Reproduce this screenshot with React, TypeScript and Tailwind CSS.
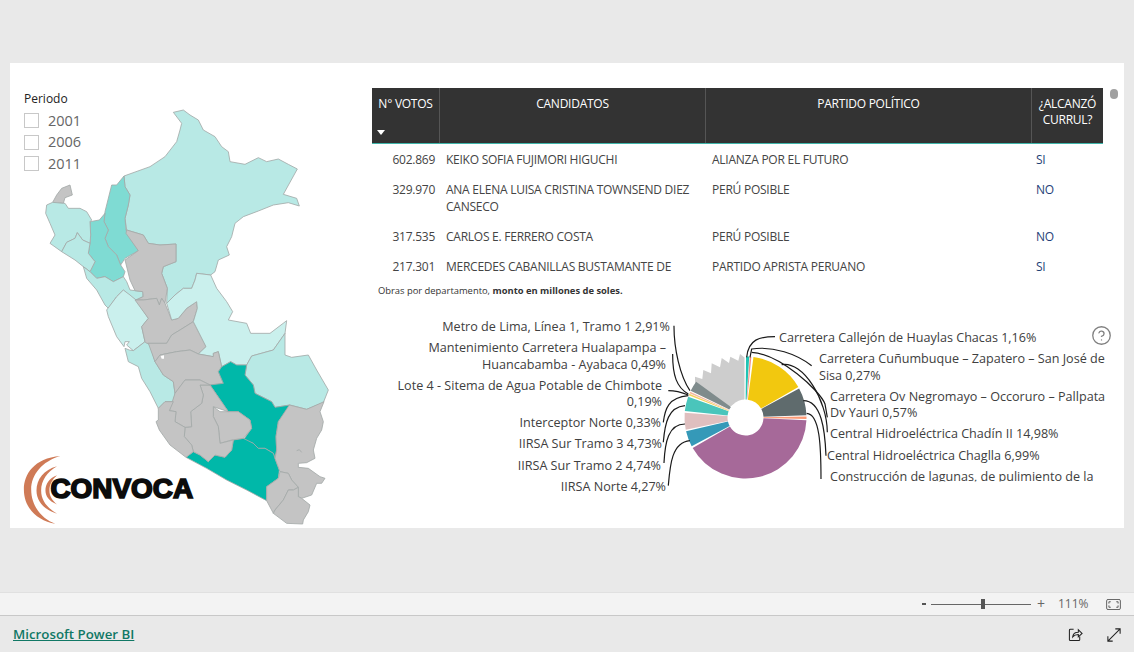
import { CircleHelp } from 'lucide-react';

type Row = { votos: string; nombre: string; partido: string; curul: string };

const rows: Row[] = [
  { votos: '602.869', nombre: 'KEIKO SOFIA FUJIMORI HIGUCHI', partido: 'ALIANZA POR EL FUTURO', curul: 'SI' },
  { votos: '329.970', nombre: 'ANA ELENA LUISA CRISTINA TOWNSEND DIEZ CANSECO', partido: 'PERÚ POSIBLE', curul: 'NO' },
  { votos: '317.535', nombre: 'CARLOS E. FERRERO COSTA', partido: 'PERÚ POSIBLE', curul: 'NO' },
  { votos: '217.301', nombre: 'MERCEDES CABANILLAS BUSTAMANTE DE LLANOS', partido: 'PARTIDO APRISTA PERUANO', curul: 'SI' },
];

const LIGHT = '#b8e9e5';
const PALE = '#caf0ed';
const MID = '#7fdbd3';
const DARK = '#00b8a9';
const GRAY = '#c4c4c4';

// departments, in the coordinates of a 3x crop of the map
const regions: [string, string][] = [
  // Loreto
  [LIGHT, '372,288 450,260 495,230 530,185 540,150 545,130 520,97 550,90 570,105 595,120 610,150 645,170 665,200 685,215 690,245 735,253 775,233 800,245 835,237 865,253 892,267 850,343 890,355 898,378 865,368 820,375 775,393 730,410 705,430 695,470 680,500 688,525 655,540 645,575 632,585 590,580 585,600 575,625 550,625 525,645 500,670 502,625 485,580 490,560 528,545 528,492 480,495 445,490 430,465 380,450 375,415 385,375 390,345 375,320'],
  // Amazonas
  [MID, '372,288 350,315 335,315 315,395 312,425 325,450 315,475 325,500 350,525 362,555 375,535 415,512 378,450 375,415 385,375 390,345 375,320'],
  // Cajamarca
  [MID, '315,400 298,420 270,425 272,465 270,490 265,520 285,545 270,575 290,595 315,590 340,605 370,590 375,575 362,555 350,525 325,500 315,475 325,450 312,425'],
  // Tumbes
  [GRAY, '158,367 170,345 185,325 210,315 217,345 195,353 190,370'],
  // Piura
  [LIGHT, '137,400 140,375 158,367 190,370 195,370 205,385 240,385 260,395 275,420 270,425 272,465 270,490 248,480 232,458 225,475 200,487 185,515 150,490 165,465 150,430'],
  // Lambayeque
  [LIGHT, '185,515 200,487 225,475 232,458 248,480 270,490 265,520 285,545 270,575 250,560 225,540'],
  // La Libertad
  [LIGHT, '250,560 270,575 290,595 315,590 340,605 370,590 380,605 390,630 430,635 428,650 408,660 400,655 380,640 370,630 350,650 325,685 315,675 290,630 260,595'],
  // Ancash
  [PALE, '320,690 350,650 370,630 390,645 408,660 445,715 425,740 435,785 400,812 380,795 388,785 375,785 372,800 350,770 325,710'],
  // Lima
  [LIGHT, '375,805 388,810 400,812 435,785 450,795 465,845 490,885 520,905 525,940 520,965 495,965 475,985 450,935 425,895 415,860 385,845'],
  // San Martin
  [GRAY, '380,450 430,465 445,490 480,495 528,492 528,545 490,560 485,580 502,625 495,670 485,655 478,675 470,655 430,660 408,660 430,650 428,635 405,632 390,600 375,540 415,512 378,460'],
  // Huanuco
  [GRAY, '405,660 430,660 470,655 478,675 485,655 495,670 515,720 535,715 560,685 590,665 592,685 580,725 540,750 515,765 500,790 440,790 435,785 425,740 445,715'],
  // Pasco
  [GRAY, '445,790 500,790 515,765 540,750 580,725 618,800 595,822 570,810 530,815 480,825 465,845'],
  // Ucayali
  [PALE, '500,670 525,645 550,625 575,625 585,600 590,580 632,585 650,625 680,665 698,695 685,720 740,730 752,760 810,760 860,722 855,760 820,810 755,828 740,855 710,855 692,845 665,860 655,815 640,820 640,830 595,822 618,800 580,725 592,685 590,665 560,685 535,715 515,720'],
  // Madre de Dios
  [LIGHT, '740,855 755,828 820,810 855,760 855,825 875,832 925,825 950,870 985,930 970,968 920,988 870,975 825,982 815,965 765,940 760,915 735,885'],
  // Junin
  [GRAY, '465,845 480,825 530,815 570,810 595,822 640,830 640,820 655,815 665,860 655,875 670,910 630,915 600,900 555,900 525,940 520,905 490,885'],
  // Cusco
  [DARK, '665,860 692,845 710,855 740,855 735,885 760,915 765,940 815,965 825,982 870,975 835,1025 828,1070 830,1110 825,1135 820,1120 795,1105 775,1105 760,1090 730,1080 755,1045 750,1020 715,995 685,995 630,915 670,910 655,875'],
  // Arequipa
  [DARK, '558,1132 580,1115 600,1125 625,1145 645,1125 675,1132 695,1110 700,1080 730,1075 760,1090 775,1105 795,1105 820,1120 825,1135 838,1170 835,1195 800,1220 800,1262 740,1230 680,1200 620,1165'],
  // Apurimac
  [GRAY, '640,980 660,995 685,995 715,995 750,1020 755,1045 730,1075 695,1080 660,1090 655,1040 640,1010'],
  // Ayacucho
  [GRAY, '630,915 685,995 640,980 640,1010 655,1040 660,1090 700,1080 695,1110 675,1132 645,1125 625,1145 600,1125 580,1115 575,1095 553,1070 555,1042 575,1040 572,995 605,970 610,945 600,915'],
  // Huancavelica
  [GRAY, '555,900 600,900 630,915 600,915 610,945 605,970 572,995 575,1040 555,1042 525,1025 528,995 508,992 525,940'],
  // Ica
  [GRAY, '475,985 495,965 520,965 508,992 528,995 525,1025 555,1042 553,1070 575,1095 580,1115 558,1132 510,1095 478,1050 468,1025 475,1020'],
  // Puno
  [GRAY, '868,975 920,988 972,965 960,995 970,1025 965,1050 950,1075 940,1110 945,1135 920,1148 895,1150 895,1162 925,1165 960,1190 975,1195 965,1210 950,1210 935,1245 905,1255 895,1250 895,1222 875,1200 865,1180 840,1175 838,1170 825,1135 830,1110 828,1070 835,1025'],
  // Moquegua
  [GRAY, '840,1175 865,1180 875,1200 895,1222 880,1230 865,1230 850,1260 825,1290 820,1300 800,1262 800,1220 835,1195'],
  // Tacna
  [GRAY, '895,1222 895,1250 905,1255 930,1275 925,1295 910,1320 908,1332 860,1330 820,1300 825,1290 850,1260 865,1230 880,1230'],
];

const CX = 745.5;
const CY = 418.5;

function slice(from: number, to: number, r: number, inner = 18) {
  const pt = (deg: number, rad: number) => {
    const a = (deg * Math.PI) / 180;
    return `${(CX + rad * Math.sin(a)).toFixed(2)} ${(CY - rad * Math.cos(a)).toFixed(2)}`;
  };
  const large = to - from > 180 ? 1 : 0;
  return `M${pt(from, inner)} L${pt(from, r)} A${r} ${r} 0 ${large} 1 ${pt(to, r)} L${pt(to, inner)} A${inner} ${inner} 0 ${large} 0 ${pt(from, inner)}Z`;
}

const slices: [string, number, number, number][] = [
  ['#1fc4b4', 0.5, 3.5, 61],
  ['#f08f83', 4, 5.5, 61],
  ['#f2c80f', 7.5, 60, 61],
  ['#5f6b6d', 61.5, 88, 61],
  ['#fd9a75', 89, 91.5, 61],
  ['#a66999', 92.5, 240, 61],
  ['#3599b8', 242, 257, 61],
  ['#dfbfbf', 258.5, 274.5, 61],
  ['#4ac5bb', 276, 290, 61],
  ['#f4d25a', 291.5, 293, 61],
  ['#f5b8a0', 293.5, 295, 61],
  ['#7f8b8c', 296, 306, 61],
];

type Label = { x: number; y: number; anchor: 'start' | 'end'; text: string };

const labels: Label[] = [
  { x: 670, y: 332, anchor: 'end', text: 'Metro de Lima, Línea 1, Tramo 1 2,91%' },
  { x: 666, y: 353, anchor: 'end', text: 'Mantenimiento Carretera Hualapampa –' },
  { x: 666, y: 370, anchor: 'end', text: 'Huancabamba - Ayabaca 0,49%' },
  { x: 662, y: 391, anchor: 'end', text: 'Lote 4 - Sitema de Agua Potable de Chimbote' },
  { x: 662, y: 407, anchor: 'end', text: '0,19%' },
  { x: 661, y: 428, anchor: 'end', text: 'Interceptor Norte 0,33%' },
  { x: 662, y: 449, anchor: 'end', text: 'IIRSA Sur Tramo 3 4,73%' },
  { x: 661, y: 471, anchor: 'end', text: 'IIRSA Sur Tramo 2 4,74%' },
  { x: 666, y: 492, anchor: 'end', text: 'IIRSA Norte 4,27%' },
  { x: 779, y: 343, anchor: 'start', text: 'Carretera Callejón de Huaylas Chacas 1,16%' },
  { x: 819, y: 364, anchor: 'start', text: 'Carretera Cuñumbuque – Zapatero – San José de' },
  { x: 819, y: 381, anchor: 'start', text: 'Sisa 0,27%' },
  { x: 830, y: 402, anchor: 'start', text: 'Carretera Ov Negromayo – Occoruro – Pallpata' },
  { x: 830, y: 418, anchor: 'start', text: 'Dv Yauri 0,57%' },
  { x: 830, y: 439, anchor: 'start', text: 'Central Hidroeléctrica Chadín II 14,98%' },
  { x: 827, y: 461, anchor: 'start', text: 'Central Hidroeléctrica Chaglla 6,99%' },
];

const leadersLeft = [
  'M912 50C912 120 930 200 960 245',
  'M908 135C908 200 920 235 955 255',
  'M895 245C920 245 935 250 955 258',
  'M880 340C885 300 895 265 955 260',
  'M880 400C885 340 895 295 945 290',
  'M882 462C885 400 895 345 945 345',
  'M895 530C900 470 905 400 960 395',
];

const leadersRight = [
  'M105 68C60 68 25 75 20 130',
  'M215 155C170 120 100 95 35 105L30 130',
  'M35 115C120 120 240 230 255 270L262 310',
  'M262 355C262 260 190 140 125 152',
  'M258 425C255 350 245 260 190 260',
  'M243 495C243 400 240 300 200 298',
];

function PeruMap() {
  return (
    <svg viewBox="30 0 1050 1344" className="mt-[17px] h-[448px] w-[350px]">
      {regions.map(([fill, points], i) => (
        <polygon key={i} points={points} fill={fill} stroke="#a3a9a8" strokeWidth={2.5} strokeLinejoin="round" />
      ))}
      <path d="M890 1112 898 1109 905 1117" fill="none" stroke="#a3a9a8" strokeWidth={2.5} />
      <polygon points="482,828 492,826 492,836 485,836" fill="#fff" />
    </svg>
  );
}

function Logo() {
  return (
    <svg viewBox="30 35 530 220" className="absolute left-[10px] top-[390px] h-[73px] w-[177px]">
      <g fill="#cf7a56">
        <path d="M150 44C70 50 40 100 40 145C40 200 80 240 135 248C95 235 62 195 62 145C62 100 95 60 150 44Z" />
        <path d="M140 75C100 85 78 115 78 148C78 180 100 205 140 218C110 200 92 178 92 148C92 118 110 92 140 75Z" />
        <path d="M140 102C115 110 105 130 105 148C105 165 115 180 140 190C125 178 117 165 117 148C117 130 125 115 140 102Z" />
      </g>
      <text
        x="120"
        y="171"
        textLength="430"
        lengthAdjust="spacingAndGlyphs"
        fontSize="82"
        fontWeight="700"
        fill="#0c0c0c"
        stroke="#0c0c0c"
        strokeWidth="5"
        fontFamily="'Liberation Sans', sans-serif"
      >
        CONVOCA
      </text>
    </svg>
  );
}

function Slicer() {
  return (
    <div className="absolute left-[14px] top-[28px] text-[12px] leading-[16px] text-[#222]">
      <p>Periodo</p>
      <div className="mt-[6px] flex flex-col gap-[6.5px]">
        {['2001', '2006', '2011'].map((y) => (
          <label key={y} className="flex h-[15px] items-center gap-[9px] text-[14.5px] text-[#666]">
            <span className="h-[15px] w-[15px] border border-[#c8c8c8] bg-white" />
            {y}
          </label>
        ))}
      </div>
    </div>
  );
}

function Table() {
  return (
    <div className="h-[188px] w-[731px] overflow-hidden text-[12px] tracking-[-0.25px]">
      <div className="grid h-[56px] grid-cols-[67px_266px_326px_72px] border-b border-[#3fb5aa] bg-[#333] leading-[16px] text-white">
        <div className="relative pt-[8px] text-center">
          N° VOTOS
          <span className="absolute bottom-[8px] left-[5px] h-0 w-0 border-x-[4px] border-t-[5px] border-x-transparent border-t-white" />
        </div>
        <div className="border-l border-[#555] pt-[8px] text-center">CANDIDATOS</div>
        <div className="border-l border-[#555] pt-[8px] text-center">PARTIDO POLÍTICO</div>
        <div className="border-l border-[#555] pt-[8px] text-center">
          ¿ALCANZÓ
          <br />
          CURRUL?
        </div>
      </div>
      <div className="leading-[17px] text-[#444]">
        {rows.map((r) => (
          <div key={r.votos} className="grid grid-cols-[67px_266px_326px_72px] py-[6.5px]">
            <div className="pr-[4px] text-right">{r.votos}</div>
            <div className="pl-[7px] pr-[10px]">{r.nombre}</div>
            <div className="pl-[7px]">{r.partido}</div>
            <div className="pl-[5px] text-[#1f3f77]">{r.curul}</div>
          </div>
        ))}
      </div>
    </div>
  );
}

function Chart() {
  return (
    <div className="relative mt-[12px] h-[185px] w-[752px]">
      <svg viewBox="372 310 752 185" className="h-[185px] w-[752px]" fontFamily="'Open Sans', sans-serif">
        <defs>
          <clipPath id="label-clip">
            <rect x="372" y="310" width="752" height="172.500" />
          </clipPath>
        </defs>
        <polygon
          fill="#cdcdcd"
          points="695,377.700 702.300,380 703.300,371 711,374.300 711.700,364.300 720,368.300 721.700,359 729,364 730.300,357.700 738.300,361.700 740,355 744.500,358.500 744.500,400.500 729,408 695,385.700"
        />
        <circle cx={CX} cy={CY} r={18} fill="#fff" />
        {slices.map(([fill, from, to, r]) => (
          <path key={fill} d={slice(from, to, r)} fill={fill} />
        ))}
        <g transform="translate(370 310) scale(0.3333)" fill="none" stroke="#1a1a1a" strokeWidth={3.6}>
          {leadersLeft.map((d) => (
            <path key={d} d={d} />
          ))}
        </g>
        <g transform="translate(740 315) scale(0.3333)" fill="none" stroke="#1a1a1a" strokeWidth={3.6}>
          {leadersRight.map((d) => (
            <path key={d} d={d} />
          ))}
        </g>
        {labels.map((l) => (
          <text key={l.text} x={l.x} y={l.y} textAnchor={l.anchor} fontSize={12.6} fill="#404040">
            {l.text}
          </text>
        ))}
        <text x={830} y={482} fontSize={12.6} fill="#404040" clipPath="url(#label-clip)">
          Construcción de lagunas, de pulimiento de la
        </text>
      </svg>
      <CircleHelp className="absolute right-[12px] top-[16px] h-[21px] w-[21px] text-[#808080]" strokeWidth={1.5} />
    </div>
  );
}

export default function App() {
  return (
    <div className="flex h-[652px] w-full flex-col overflow-hidden bg-[#e9e9e9] font-['Open_Sans',sans-serif]">
      <main className="h-[592px] px-[10px] pt-[63px]">
        <div className="flex h-[465px] w-[1114px] overflow-hidden bg-white">
          <div className="relative w-[362px] shrink-0">
            <PeruMap />
            <Slicer />
            <Logo />
          </div>
          <div className="relative flex-1 pt-[25px]">
            <Table />
            <p className="mt-[9px] pl-[6px] text-[9.4px] leading-[12px] text-[#333]">
              Obras por departamento, <b>monto en millones de soles.</b>
            </p>
            <Chart />
            <span className="absolute right-[6px] top-[26px] h-[10px] w-[8px] rounded-full bg-[#a0a0a0]" />
          </div>
        </div>
      </main>
      <div className="flex h-[24px] items-center justify-end border-y border-y-[#e0e0e0] border-b-[#c8c8c8] bg-[#f3f3f3] text-[12px] text-[#666]">
        <span className="mr-[5px] h-[2px] w-[4px] bg-[#555]" />
        <div className="relative flex h-[8px] w-[100px] items-center">
          <div className="h-px w-full bg-[#666]" />
          <span className="absolute left-[50px] h-[10px] w-[4px] bg-[#555]" />
        </div>
        <span className="ml-[6px] text-[14px] leading-none">+</span>
        <span className="ml-[13px] w-[31px]">111%</span>
        <svg viewBox="0 0 16 12" className="ml-[17px] mr-[13px] h-[11px] w-[15px]" fill="none" stroke="#555">
          <rect x="0.5" y="0.5" width="15" height="11" rx="1.5" />
          <path d="M3 5V3h2M11 3h2v2M13 7v2h-2M5 9H3V7" />
        </svg>
      </div>
      <footer className="flex flex-1 items-center justify-between px-[13px] pt-[1px]">
        <a href="#" className="text-[13.3px] font-semibold text-[#117865] underline">
          Microsoft Power BI
        </a>
        <div className="flex items-center gap-[24px]">
          <svg viewBox="0 0 16 16" className="h-[15px] w-[15px]" fill="none" stroke="#222" strokeWidth={1.1}>
            <path d="M6 2.500H2.500a1 1 0 0 0-1 1v10a1 1 0 0 0 1 1h9a1 1 0 0 0 1-1V10" />
            <path d="M5 10.500c.3-3 2.500-5 6-5V3l4 3.800-4 3.700V8c-2.500 0-4.500.8-6 2.500Z" />
          </svg>
          <svg viewBox="0 0 16 16" className="h-[14px] w-[14px]" fill="none" stroke="#222" strokeWidth={1.2}>
            <path d="M9.500 1H15v5.500M15 1 1 15M1 9.500V15h5.500" />
          </svg>
        </div>
      </footer>
    </div>
  );
}
